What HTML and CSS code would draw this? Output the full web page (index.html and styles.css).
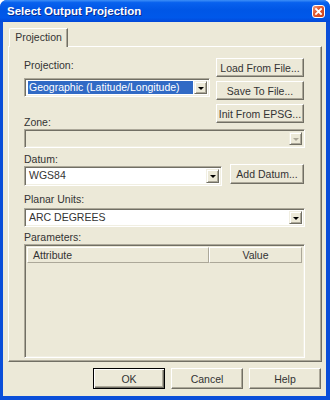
FILE: index.html
```html
<!DOCTYPE html>
<html lang="en">
<head>
  <meta charset="UTF-8">
  <title>Select Output Projection</title>
  <link rel="stylesheet" href="styles.css">
</head>
<body>

  <div class="window">
    <div class="titlebar">
      <span class="title">Select Output Projection</span>
      <span class="close">
        <svg width="13" height="13" viewBox="0 0 13 13">
          <path d="M4 4 L9 9 M9 4 L4 9" stroke="#ffffff" stroke-width="1.8" stroke-linecap="square"/>
        </svg>
      </span>
    </div>

    <div class="client">
      <div class="tabs">
        <div class="tab">Projection</div>
      </div>

      <div class="panel">
        <div class="top-row">
          <div class="left-col">
            <label class="label first">Projection:</label>
            <div class="combo">
              <div class="combo-text"><span class="selected">Geographic (Latitude/Longitude)</span></div>
              <div class="combo-btn"><span class="arrow"></span></div>
            </div>
            <label class="label zone">Zone:</label>
          </div>
          <div class="right-col">
            <button class="btn">Load From File...</button>
            <button class="btn">Save To File...</button>
            <button class="btn">Init From EPSG...</button>
          </div>
        </div>

        <div class="combo disabled">
          <div class="combo-text"></div>
          <div class="combo-btn"><span class="arrow"></span></div>
        </div>

        <label class="label">Datum:</label>
        <div class="datum-row">
          <div class="combo datum">
            <div class="combo-text">WGS84</div>
            <div class="combo-btn"><span class="arrow"></span></div>
          </div>
          <button class="btn add">Add Datum...</button>
        </div>

        <label class="label units">Planar Units:</label>
        <div class="combo">
          <div class="combo-text">ARC DEGREES</div>
          <div class="combo-btn"><span class="arrow"></span></div>
        </div>

        <label class="label params">Parameters:</label>
        <div class="grid">
          <div class="grid-head">
            <div class="col attr">Attribute</div>
            <div class="col value">Value</div>
          </div>
        </div>
      </div>

      <div class="footer">
        <button class="btn dlg default">OK</button>
        <button class="btn dlg">Cancel</button>
        <button class="btn dlg">Help</button>
      </div>
    </div>
  </div>

</body>
</html>
```

FILE: styles.css
```css
/* General */
body {
  margin: 0;
  font-family: "Liberation Sans", Arial, sans-serif;
  font-size: 10.5px;
  color: #222222;
}

/* Window frame */
.window {
  width: 330px;
  height: 400px;
  display: flex;
  flex-direction: column;
  background-color: #0a4ed9;
  border-radius: 7px 7px 0 0;
  overflow: hidden;
}

.titlebar {
  height: 22px;
  flex: none;
  display: flex;
  align-items: center;
  padding: 0 5px 0 7px;
  background: linear-gradient(to bottom, #3d8ff7 0%, #0861ee 12%, #0056e6 45%, #0058ea 80%, #0247d8 100%);
}

.title {
  color: #ffffff;
  font-weight: bold;
  font-size: 11.5px;
  text-shadow: 1px 1px #0a2c8f;
}

.close {
  margin-left: auto;
  width: 13px;
  height: 13px;
  border: 1px solid #ffffff;
  border-radius: 3px;
  background: linear-gradient(135deg, #f09c82 0%, #e05a32 40%, #c8401c 100%);
  box-sizing: border-box;
  display: flex;
}

.close svg {
  margin: -1px;
}

/* Client area */
.client {
  flex: 1;
  margin: 0 4px 4px 3px;
  background-color: #ece9d8;
  display: flex;
  flex-direction: column;
  padding: 6px 0 7px 0;
}

.tabs {
  display: flex;
  padding-left: 6px;
  position: relative;
  z-index: 1;
}

.tab {
  width: 59px;
  height: 19px;
  box-sizing: border-box;
  border-top: 1px solid #ffffff;
  border-left: 1px solid #ffffff;
  border-right: 1px solid #716f64;
  box-shadow: inset -1px 0 #aca899;
  border-radius: 2px 0 0 0;
  background-color: #ece9d8;
  text-align: center;
  line-height: 17px;
  color: #333333;
}

.panel {
  flex: 1;
  margin: -1px 4px 0 5px;
  border: 1px solid;
  border-color: #ffffff #716f64 #716f64 #ffffff;
  box-shadow: inset -1px -1px #aca899;
  padding: 11px 16px 3px 15px;
  display: flex;
  flex-direction: column;
}

/* Labels */
.label {
  display: block;
  height: 13px;
  line-height: 13px;
  color: #333333;
  margin-top: 5px;
}

.label.first {
  margin-top: 1px;
  margin-bottom: 6px;
}

.label.zone {
  margin-top: 19px;
}

.label.units {
  margin-top: 7px;
  margin-bottom: 2px;
}

.label.params {
  margin-top: 4px;
}

/* Top section */
.top-row {
  display: flex;
  gap: 6px;
}

.left-col {
  width: 186px;
}

.right-col {
  width: 88px;
  display: flex;
  flex-direction: column;
  gap: 4px;
}

/* Buttons */
.btn {
  height: 19px;
  padding: 0;
  font-family: inherit;
  font-size: 10.5px;
  color: #333333;
  background-color: #ece9d8;
  border: 1px solid;
  border-color: #ffffff #716f64 #716f64 #ffffff;
  box-shadow: inset -1px -1px #aca899;
}

.btn.add {
  width: 74px;
  height: 20px;
  margin-top: -2px;
}

/* Combo boxes */
.combo {
  height: 19px;
  box-sizing: border-box;
  display: flex;
  border: 1px solid;
  border-color: #aca899 #ffffff #ffffff #aca899;
  box-shadow: inset 1px 1px #716f64, inset -1px -1px #f1efe2;
  background-color: #ffffff;
  padding: 2px 2px 2px 2px;
}

.combo-text {
  flex: 1;
  line-height: 13px;
  padding-left: 2px;
  color: #333333;
  white-space: nowrap;
  overflow: hidden;
}

.selected {
  display: block;
  background-color: #316ac5;
  color: #ffffff;
  margin: 0 1px 0 -1px;
  padding-left: 1px;
}

.combo-btn {
  width: 13px;
  flex: none;
  box-sizing: border-box;
  background-color: #ece9d8;
  border: 1px solid;
  border-color: #f1efe2 #716f64 #716f64 #f1efe2;
  box-shadow: inset 1px 1px #ffffff, inset -1px -1px #aca899;
  display: flex;
  align-items: center;
  justify-content: center;
}

.arrow {
  width: 0;
  height: 0;
  border-left: 3px solid transparent;
  border-right: 3px solid transparent;
  border-top: 3px solid #000000;
  margin-top: 1px;
}

.combo.disabled {
  background-color: #ece9d8;
}

.combo.disabled .arrow {
  border-top-color: #aca899;
}

.datum-row {
  display: flex;
  gap: 8px;
  align-items: flex-start;
}

.combo.datum {
  width: 198px;
  height: 20px;
}

/* Parameters grid */
.grid {
  flex: 1;
  border: 1px solid;
  border-color: #aca899 #ffffff #ffffff #aca899;
  box-shadow: inset 1px 1px #716f64, inset -1px -1px #f1efe2;
  padding: 2px;
  background-color: #ece9d8;
}

.grid-head {
  display: flex;
  height: 16px;
}

.col {
  box-sizing: border-box;
  border: 1px solid;
  border-color: #ffffff #aca899 #aca899 #ffffff;
  line-height: 14px;
  color: #333333;
}

.col.attr {
  width: 182px;
  padding-left: 5px;
}

.col.value {
  flex: 1;
  text-align: center;
}

/* Dialog buttons */
.footer {
  display: flex;
  justify-content: flex-end;
  gap: 6px;
  margin-top: 6px;
  padding-right: 5px;
}

.btn.dlg {
  width: 72px;
  height: 21px;
}

.btn.default {
  border: 1px solid #000000;
  box-shadow: inset 1px 1px #ffffff, inset -1px -1px #716f64, inset -2px -2px #aca899;
}
```
